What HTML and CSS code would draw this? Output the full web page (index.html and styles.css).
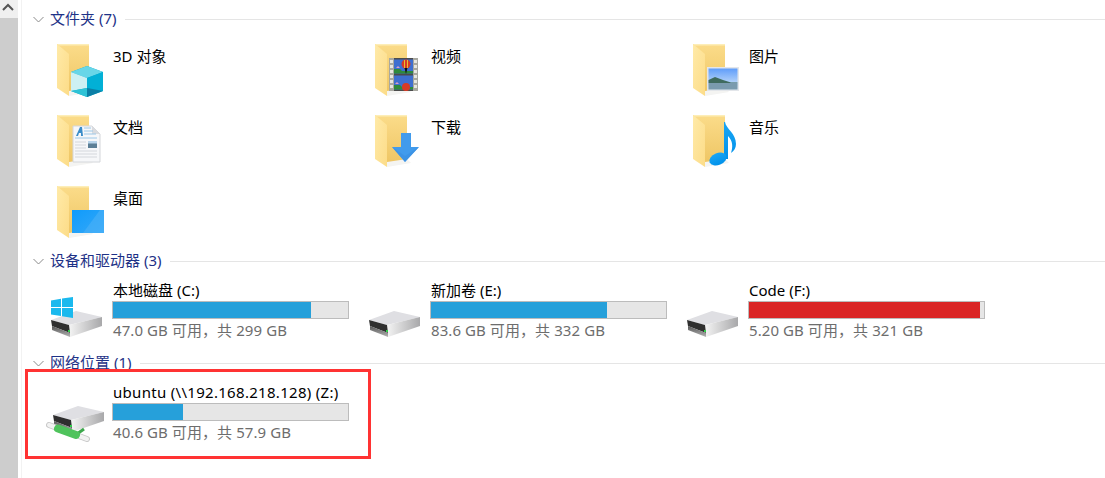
FILE: index.html
```html
<!DOCTYPE html>
<html lang="zh-CN">
<head>
<meta charset="utf-8">
<title>此电脑</title>
<link rel="stylesheet" href="styles.css">
</head>
<body>
<svg class="defs" aria-hidden="true">
  <defs>
    <linearGradient id="gBack" x1="0" y1="0" x2="0" y2="1"><stop offset="0" stop-color="#fbdc8a"/><stop offset="1" stop-color="#eec563"/></linearGradient>
    <linearGradient id="gFlap" x1="0" y1="0" x2="1" y2="1"><stop offset="0" stop-color="#ffeaa8"/><stop offset="1" stop-color="#fcdc88"/></linearGradient>
    <linearGradient id="gDisk" x1="0" y1="0" x2="1" y2="0"><stop offset="0" stop-color="#f4f4f4"/><stop offset="1" stop-color="#a8a8aa"/></linearGradient>
    <linearGradient id="gStrip" x1="0" y1="0" x2="0" y2="1"><stop offset="0" stop-color="#555"/><stop offset="1" stop-color="#b4b4b4"/></linearGradient>
    <linearGradient id="gDesk" x1="0" y1="0" x2="1" y2="1"><stop offset="0" stop-color="#0f9bfb"/><stop offset="1" stop-color="#35a8f8"/></linearGradient>
    <linearGradient id="gNote" x1="0" y1="0" x2="0" y2="1"><stop offset="0" stop-color="#1aa5f4"/><stop offset="1" stop-color="#0091ea"/></linearGradient>
    <linearGradient id="gSky" x1="0" y1="0" x2="0" y2="1"><stop offset="0" stop-color="#5f9dfa"/><stop offset="1" stop-color="#dcecf8"/></linearGradient>
    <symbol id="folder" viewBox="0 0 48 54">
      <path d="M0 0H32V44L12 49V44Z" fill="url(#gBack)"/>
      <path d="M0 0H32V1.500H2Z" fill="#fdeeb8"/>
      <path d="M0 0L12 10V52L0 44Z" fill="url(#gFlap)"/>
      <path d="M12 47L32 44L36 48L12 52Z" fill="#f4f4f2"/>
    </symbol>
    <symbol id="drive" viewBox="0 0 53 31">
      <path d="M0 10L25 1L51 7L18 15Z" fill="#dfdfe3"/>
      <path d="M18 15L51 7V16L19 27Z" fill="url(#gDisk)"/>
      <path d="M0 10L18 15L19 23L1 16Z" fill="#2f2f2f"/>
      <path d="M1 16L19 23V27L1 20Z" fill="url(#gStrip)"/>
      <rect x="17" y="20" width="2" height="2" fill="#30d04a"/>
    </symbol>
  </defs>
</svg>
<div class="track"><button class="track-up" type="button"><svg width="12" height="8" viewBox="0 0 12 8"><path d="M1 7L6 2L11 7" fill="none" stroke="#555" stroke-width="2"/></svg></button></div>
<main class="content">
  <section class="group group-folders">
    <h2 class="group-head"><svg class="chev" width="11" height="7" viewBox="0 0 11 7"><path d="M.5 1L5.500 6L10.500 1" fill="none" stroke="#8a8a8a"/></svg><span>文件夹 (7)</span><i class="rule"></i></h2>
    <div class="grid">
      <div class="tile">
        <svg class="ficon" viewBox="0 0 48 54"><use href="#folder" width="48" height="54"/><path d="M30 22L46 28V47L30 53L14 47V28Z" fill="#00aacb"/><path d="M30 22L46 28L30 34L14 28Z" fill="#68d6e8"/><path d="M14 28L30 34V44L14 47Z" fill="#cdf0f3"/><path d="M30 34L46 28V47L30 44Z" fill="#02b0d6"/><path d="M14 47L30 44V53Z" fill="#2fc3d6"/><path d="M46 47L30 44V53Z" fill="#0b7fa6"/></svg>
        <span class="fname">3D 对象</span>
      </div>
      <div class="tile">
        <svg class="ficon" viewBox="0 0 48 54"><use href="#folder" width="48" height="54"/><rect x="14" y="14" width="29" height="33" fill="#4c4c4c"/><path d="M14 14h5v33h-5zM38 14h5v33h-5z" fill="#a8a8a0"/><path d="M15 16h3v3h-3zM15 21h3v3h-3zM15 26h3v3h-3zM15 31h3v3h-3zM15 36h3v3h-3zM15 41h3v3h-3zM39 16h3v3h-3zM39 21h3v3h-3zM39 26h3v3h-3zM39 31h3v3h-3zM39 36h3v3h-3zM39 41h3v3h-3z" fill="#e6e6e0"/><rect x="19" y="15.500" width="19" height="14" fill="#3e6fd0"/><rect x="19" y="31.500" width="19" height="14" fill="#3e6fd0"/><path d="M19 25h6l2 2h11v2.500H19z" fill="#2e8a3c"/><path d="M19 41h6l2 2h11v2.500H19z" fill="#2e8a3c"/><circle cx="31" cy="20" r="4.500" fill="#d83a24"/><path d="M29.500 16v8M32.500 16v8" stroke="#e8c030"/><path d="M29.500 24h3l-1.500 6z" fill="#111"/><circle cx="31" cy="43" r="4" fill="#d83a24"/><path d="M21 24l2-2 2 2zM20 40l2-2 2 2z" fill="#d8a0c8"/></svg>
        <span class="fname">视频</span>
      </div>
      <div class="tile">
        <svg class="ficon" viewBox="0 0 48 54"><use href="#folder" width="48" height="54"/><rect x="14" y="23" width="32" height="24" fill="#e3e6ea"/><rect x="15.500" y="24.500" width="29" height="21" fill="url(#gSky)"/><path d="M15.500 36L22 33L30 36L38 38.500H44.500V39H15.500Z" fill="#3f6b5e"/><rect x="15.500" y="39" width="29" height="6.500" fill="#7a9bae"/></svg>
        <span class="fname">图片</span>
      </div>
      <div class="tile">
        <svg class="ficon" viewBox="0 0 48 54"><use href="#folder" width="48" height="54"/><path d="M16 11H35L43 19V47H16Z" fill="#f6f7f9" stroke="#d4d6da"/><path d="M35 11V19H43Z" fill="#d9dbdf"/><path d="M19 21L23 12H25L26 21H24V18H22L21 21Z" fill="#3a8cc8"/><path d="M27 13H34M27 16H36M27 19H39M18 23H40" stroke="#9cc8e8"/><path d="M18 27H29M18 30H29M18 33H29M18 36H40M18 39H40M18 42H40" stroke="#d4d7dc"/><rect x="31" y="26" width="9" height="7" fill="#5c7f96"/><rect x="31" y="26" width="9" height="2.500" fill="#b8d4ea"/></svg>
        <span class="fname">文档</span>
      </div>
      <div class="tile">
        <svg class="ficon" viewBox="0 0 48 54"><use href="#folder" width="48" height="54"/><path d="M26 18H36V32H44L30 47L17 32H26Z" fill="#419bec"/><path d="M17 32L30 47L44 32L30 41Z" fill="#3a90e2" opacity=".7"/></svg>
        <span class="fname">下载</span>
      </div>
      <div class="tile">
        <svg class="ficon" viewBox="0 0 48 54"><use href="#folder" width="48" height="54"/><path d="M31 7H32C33 14 43 18 43 29C43 33 41 36 38 38C40 32 40 26 35 21V44H31Z" fill="url(#gNote)"/><ellipse cx="25" cy="44" rx="9" ry="6" transform="rotate(-22 25 44)" fill="url(#gNote)"/></svg>
        <span class="fname">音乐</span>
      </div>
      <div class="tile">
        <svg class="ficon" viewBox="0 0 48 54"><use href="#folder" width="48" height="54"/><rect x="15" y="24" width="32" height="23" fill="url(#gDesk)"/><path d="M26 47L43 24H47V47Z" fill="#4eb2f7" opacity=".55"/></svg>
        <span class="fname">桌面</span>
      </div>
    </div>
  </section>

  <section class="group group-drives">
    <h2 class="group-head"><svg class="chev" width="11" height="7" viewBox="0 0 11 7"><path d="M.5 1L5.500 6L10.500 1" fill="none" stroke="#8a8a8a"/></svg><span>设备和驱动器 (3)</span><i class="rule"></i></h2>
    <div class="grid">
      <div class="drive">
        <div class="dicon">
          <svg class="winlogo" width="22" height="21" viewBox="0 0 22 21"><path d="M0 3.500L10 1.800V10H0ZM11 1.600L22 0V10H11ZM0 11H10V19L0 17.500ZM11 11H22V21L11 19.200Z" fill="#1ab9ee"/></svg>
          <svg class="dsvg" viewBox="0 0 53 31"><use href="#drive" width="53" height="31"/></svg>
        </div>
        <div class="dinfo"><div class="dname">本地磁盘 (C:)</div><div class="bar"><div class="fill" style="width:84.300%"></div></div><div class="dsub">47.0 GB 可用，共 299 GB</div></div>
      </div>
      <div class="drive">
        <div class="dicon"><svg class="dsvg" viewBox="0 0 53 31"><use href="#drive" width="53" height="31"/></svg></div>
        <div class="dinfo"><div class="dname">新加卷 (E:)</div><div class="bar"><div class="fill" style="width:74.900%"></div></div><div class="dsub">83.6 GB 可用，共 332 GB</div></div>
      </div>
      <div class="drive">
        <div class="dicon"><svg class="dsvg" viewBox="0 0 53 31"><use href="#drive" width="53" height="31"/></svg></div>
        <div class="dinfo"><div class="dname">Code (F:)</div><div class="bar"><div class="fill fill-full" style="width:98.300%"></div></div><div class="dsub">5.20 GB 可用，共 321 GB</div></div>
      </div>
    </div>
  </section>

  <section class="group group-net">
    <h2 class="group-head"><svg class="chev" width="11" height="7" viewBox="0 0 11 7"><path d="M.5 1L5.500 6L10.500 1" fill="none" stroke="#8a8a8a"/></svg><span>网络位置 (1)</span><i class="rule"></i></h2>
    <div class="grid">
      <div class="drive">
        <div class="dicon">
          <svg class="netsvg" width="62" height="40" viewBox="0 0 62 40">
            <use href="#drive" x="7" y="0" width="53" height="31"/>
            <path d="M3 20L41 34" stroke="#c9c9c9" stroke-width="6" stroke-linecap="round"/>
            <path d="M3 20L41 34" stroke="#f2f2f2" stroke-width="4" stroke-linecap="round"/>
            <path d="M28 31L38 24" stroke="#3da84c" stroke-width="3"/>
            <path d="M12 23.500L30 30" stroke="#4fc35c" stroke-width="8" stroke-linecap="round"/>
          </svg>
        </div>
        <div class="dinfo"><div class="dname dname-net">ubuntu (\\192.168.218.128) (Z:)</div><div class="bar"><div class="fill" style="width:29.800%"></div></div><div class="dsub">40.6 GB 可用，共 57.9 GB</div></div>
      </div>
    </div>
  </section>
</main>
<div class="callout"></div>
</body>
</html>
```
FILE: styles.css
```css
* { box-sizing: border-box; }
html, body { height: 100%; }
body {
  margin: 0;
  display: flex;
  height: 478px;
  overflow: hidden;
  background: #fff;
  color: #000;
  font: 15px/20px "Noto Sans", "Noto Sans CJK SC", sans-serif;
}
.defs { position: absolute; width: 0; height: 0; }
.track { width: 18px; flex: none; background: #cdcdcd; }
.track-up {
  display: flex;
  align-items: center;
  justify-content: center;
  width: 18px;
  height: 18px;
  padding: 0 2px 4px 0;
  border: 0;
  background: #f0f0f0;
}
.content {
  flex: 1;
  min-width: 0;
  margin-left: 3px;
  border-left: 1px solid #f2f2f2;
  padding-top: 11px;
}
.group-head {
  display: flex;
  align-items: center;
  height: 16px;
  margin: 0;
  padding-left: 11px;
  font-size: 15px;
  font-weight: 400;
  line-height: 16px;
  color: #1e3287;
  white-space: nowrap;
}
.group-head span { margin-top: -2px; }
.chev { flex: none; margin-right: 6px; }
.rule { flex: 1; height: 1px; margin-left: 9px; background: #e5e5e5; }
.grid { display: grid; grid-template-columns: repeat(3, 318px); }
.group-folders .grid { margin-top: 13px; }
.tile { display: flex; height: 71px; padding: 4px 0 0 35px; }
.ficon { flex: none; width: 48px; height: 54px; margin-right: 8px; }
.fname { margin-top: 2px; }
.drive { display: flex; height: 86px; padding: 12px 0 14px; }
.dicon { position: relative; flex: none; width: 90px; }
.dsvg { position: absolute; left: 29px; top: 29px; width: 53px; height: 31px; }
.winlogo { position: absolute; left: 29px; top: 16px; z-index: 1; }
.netsvg { position: absolute; left: 24px; top: 22px; }
.dinfo { flex: none; width: 237px; }
.dname, .dsub { height: 20px; padding-left: 1px; white-space: nowrap; }
.dname { margin-top: -1px; margin-bottom: 1px; }
.dname-net { letter-spacing: .3px; }
.dsub { color: #6d6d6d; letter-spacing: .08px; }
.bar {
  height: 18px;
  margin: 1px 0;
  border: 1px solid #bcbcbc;
  background: #e6e6e6;
}
.fill { height: 100%; background: #26a0da; }
.fill-full { background: #da2626; }
.callout {
  position: absolute;
  left: 25px;
  top: 369px;
  width: 346px;
  height: 90px;
  border: 3px solid #f33;
}
```
